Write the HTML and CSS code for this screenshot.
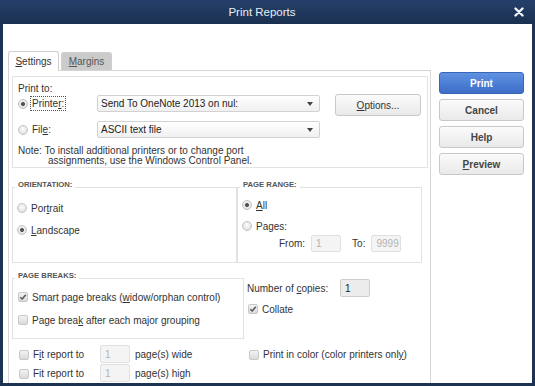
FILE: index.html
```html
<!DOCTYPE html>
<html lang="en">
<head>
    <meta charset="UTF-8" />
    <title>Print Reports</title>
    <link rel="stylesheet" href="styles.css">
</head>
<body>
    <div class="window">
        <div class="titlebar">
            <span class="title">Print Reports</span>
            <svg class="close" width="10" height="10" viewBox="0 0 10 10">
                <path d="M1.5 1.5 L8.5 8.5 M8.5 1.5 L1.5 8.5" stroke="#f2f4f7" stroke-width="2.4" stroke-linecap="round"/>
            </svg>
        </div>
        <div class="client">
            <div class="tabs-area">
                <div class="tabs">
                    <div class="tab active"><u>S</u>ettings</div>
                    <div class="tab"><u>M</u>argins</div>
                </div>
                <div class="panel">
                    <div class="print-to">
                        <div class="caption">Print to:</div>
                        <div class="print-grid">
                            <div class="opt"><span class="radio checked"></span><span class="focus">Printe<u>r</u>:</span></div>
                            <div class="select"><span>Send To OneNote 2013 on nul:</span><i class="arrow"></i></div>
                            <div class="btn options"><u>O</u>ptions...</div>
                            <div class="opt"><span class="radio"></span><span>Fil<u>e</u>:</span></div>
                            <div class="select"><span>ASCII text file</span><i class="arrow"></i></div>
                        </div>
                        <p class="note">Note: To install additional printers or to change port</p>
                        <p class="note indent">assignments, use the Windows Control Panel.</p>
                    </div>

                    <div class="row-groups">
                        <fieldset class="group orientation">
                            <legend>ORIENTATION:</legend>
                            <div class="opts">
                                <div class="opt"><span class="radio"></span><span>Por<u>t</u>rait</span></div>
                                <div class="opt"><span class="radio checked"></span><span><u>L</u>andscape</span></div>
                            </div>
                        </fieldset>
                        <fieldset class="group range">
                            <legend>PAGE RANGE:</legend>
                            <div class="opts tight">
                                <div class="opt"><span class="radio checked"></span><span><u>A</u>ll</span></div>
                                <div class="opt"><span class="radio"></span><span>Pa<u>g</u>es:</span></div>
                            </div>
                            <div class="from-to">
                                <span>From:</span>
                                <span class="field disabled">1</span>
                                <span class="to">To:</span>
                                <span class="field disabled">9999</span>
                            </div>
                        </fieldset>
                    </div>

                    <div class="row-breaks">
                        <fieldset class="group breaks">
                            <legend>PAGE BREAKS:</legend>
                            <div class="opts breaks-opts">
                                <div class="opt"><span class="check checked"><svg width="8" height="8" viewBox="0 0 8 8"><path d="M1.3 4.2 L3.2 6 L6.8 1.8" fill="none" stroke="#555" stroke-width="1.4"/></svg></span><span>Smart page breaks (<u>w</u>idow/orphan control)</span></div>
                                <div class="opt"><span class="check"></span><span>Page brea<u>k</u> after each major grouping</span></div>
                            </div>
                        </fieldset>
                        <div class="copies">
                            <div class="copies-row">
                                <span class="copies-label">Number of <u>c</u>opies:</span>
                                <span class="field count">1</span>
                            </div>
                            <div class="opt collate"><span class="check checked"><svg width="8" height="8" viewBox="0 0 8 8"><path d="M1.3 4.2 L3.2 6 L6.8 1.8" fill="none" stroke="#555" stroke-width="1.4"/></svg></span><span>Collate</span></div>
                        </div>
                    </div>

                    <div class="row-fit">
                        <div class="fit">
                            <span class="check"></span>
                            <span class="fit-label">F<u>i</u>t report to</span>
                            <span class="field disabled">1</span>
                            <span class="fit-unit">page(s) wide</span>
                        </div>
                        <div class="opt color"><span class="check"></span><span>Print in color (color printers onl<u>y</u>)</span></div>
                        <div class="fit">
                            <span class="check"></span>
                            <span class="fit-label">Fit report to</span>
                            <span class="field disabled">1</span>
                            <span class="fit-unit">page(s) high</span>
                        </div>
                    </div>
                </div>
            </div>
            <div class="buttons">
                <div class="btn primary">Print</div>
                <div class="btn">Cancel</div>
                <div class="btn">Help</div>
                <div class="btn"><u>P</u>review</div>
            </div>
        </div>
    </div>
</body>
</html>
```

FILE: styles.css
```css
body {
    margin: 0;
    font-family: "Liberation Sans", Arial, sans-serif;
    font-size: 10px;
    color: #333;
}

.window {
    width: 535px;
    height: 386px;
    background-color: #1c3352;
    display: flex;
    flex-direction: column;
}

/* Заголовок окна */
.titlebar {
    height: 24px;
    flex: none;
    display: flex;
    align-items: center;
    padding-right: 11px;
    background: linear-gradient(#24406a, #1a3050);
    color: #e9edf2;
}

.title {
    flex: 1;
    text-align: center;
    padding-left: 10px;
    font-size: 11.5px;
}

.client {
    flex: 1;
    background-color: #ffffff;
    margin: 0 3px 4px;
    display: flex;
}

/* Вкладки */
.tabs-area {
    margin-left: 5px;
    padding-top: 27px;
    width: 423px;
    display: flex;
    flex-direction: column;
}

.tabs {
    display: flex;
    align-items: flex-end;
    height: 19px;
}

.tab {
    height: 18px;
    width: 51px;
    box-sizing: border-box;
    margin-left: 2px;
    border: 1px solid #cfcfcf;
    border-bottom: none;
    border-radius: 3px 3px 0 0;
    background-color: #cbcbcb;
    color: #555;
    display: flex;
    align-items: center;
    justify-content: center;
}

.tab.active {
    height: 20px;
    margin-left: 0;
    margin-bottom: -1px;
    background-color: #ffffff;
    color: #333;
    position: relative;
    z-index: 1;
}

.panel {
    flex: 1;
    border: 1px solid #d6d6d6;
    border-bottom: none;
    padding: 5px 2px 0 3px;
}

/* Блок "Print to" */
.print-to {
    height: 92px;
    box-sizing: border-box;
    border: 1px solid #e2e2e2;
    padding: 6px 5px 0;
}

.caption {
    line-height: 12px;
}

.print-grid {
    display: grid;
    grid-template-columns: 79px 223px 101px;
    grid-template-rows: 17px 17px;
    row-gap: 9px;
}

.btn.options {
    grid-column: 3;
    grid-row: 1 / span 2;
    align-self: start;
    margin: -1px 0 0 15px;
    width: 86px;
    font-weight: normal;
    color: #333;
}

.select {
    display: flex;
    align-items: center;
    justify-content: space-between;
    border: 1px solid #d2d2d2;
    border-radius: 2px;
    background: linear-gradient(#ffffff, #f0f0f0);
    padding: 0 6px 0 3px;
    color: #222;
}

.arrow {
    border-left: 3px solid transparent;
    border-right: 3px solid transparent;
    border-top: 4px solid #444;
}

.note {
    margin: 0;
    line-height: 10px;
}

.note:first-of-type {
    margin-top: 8px;
}

.note.indent {
    padding-left: 30px;
}

/* Радио и флажки */
.opt {
    display: flex;
    align-items: center;
    height: 14px;
    white-space: nowrap;
}

.print-grid .opt {
    height: auto;
}

.radio {
    width: 10px;
    height: 10px;
    box-sizing: border-box;
    border: 1px solid #c2c2c2;
    border-radius: 50%;
    margin-right: 4px;
    background: radial-gradient(circle at 50% 40%, #fdfdfd, #d8d8d8);
    flex: none;
}

.radio.checked {
    background: radial-gradient(circle, #555 0 1.7px, transparent 2.3px), radial-gradient(circle at 50% 40%, #fdfdfd, #d8d8d8);
}

.check {
    width: 10px;
    height: 10px;
    box-sizing: border-box;
    border: 1px solid #c8c8c8;
    border-radius: 2px;
    margin-right: 4px;
    background: linear-gradient(#f3f3f3, #dadada);
    flex: none;
    display: flex;
    align-items: center;
    justify-content: center;
}

.focus {
    outline: 1px dotted #555;
    outline-offset: 1px;
}

/* Группы */
fieldset.group {
    margin: 0;
    padding: 0;
    border: 1px solid #e2e2e2;
    box-sizing: border-box;
    min-width: 0;
}

legend {
    margin-left: 2px;
    padding: 0 3px 4px;
    font-size: 7.7px;
    font-weight: bold;
    color: #555;
    line-height: 10px;
}

.row-groups {
    display: flex;
    margin-top: 12px;
}

.orientation {
    margin-left: 1px;
    width: 225px;
    height: 83px;
}

.range {
    margin-left: 5px;
    width: 185px;
    height: 83px;
}

.opts {
    display: flex;
    flex-direction: column;
    gap: 8px;
    padding: 7px 0 0 4px;
}

.opts.tight {
    gap: 7px;
    padding-top: 4px;
}

.from-to {
    display: flex;
    align-items: center;
    margin: 2px 0 0 41px;
}

.from-to .field {
    margin-left: 6px;
}

.from-to .to {
    margin-left: 11px;
}

.field {
    width: 30px;
    height: 17px;
    box-sizing: border-box;
    border: 1px solid #e0e0e0;
    border-radius: 2px;
    padding-left: 4px;
    display: flex;
    align-items: center;
    flex: none;
}

.field.disabled {
    background-color: #f4f4f4;
    color: #b3b3b3;
}

.row-breaks {
    display: flex;
    margin-top: 8px;
}

.breaks {
    margin-left: 1px;
    width: 232px;
    height: 68px;
}

.breaks-opts {
    gap: 9px;
    padding: 5px 0 0 5px;
}

.copies {
    margin-left: 3px;
    padding-top: 8px;
}

.copies-row {
    display: flex;
    align-items: center;
}

.copies-label {
    width: 93px;
}

.field.count {
    height: 18px;
    background-color: #ececec;
    border-color: #cdcdcd;
    color: #222;
}

.collate {
    margin: 5px 0 0 1px;
}

/* Нижние строки */
.row-fit {
    display: grid;
    grid-template-columns: 237px auto;
    grid-template-rows: 19px 19px;
    margin-top: 6px;
}

.fit {
    display: flex;
    align-items: flex-start;
    padding-left: 7px;
}

.fit .check {
    margin-top: 5px;
}

.fit-label {
    width: 67px;
    line-height: 19px;
}

.fit .field {
    height: 18px;
}

.fit-unit {
    margin-left: 5px;
    line-height: 19px;
}

.color {
    height: 19px;
}

/* Кнопки */
.buttons {
    margin-left: 8px;
    padding-top: 48px;
    width: 85px;
    display: flex;
    flex-direction: column;
    gap: 5px;
}

.btn {
    height: 22px;
    box-sizing: border-box;
    border: 1px solid #c8c8c8;
    border-radius: 3px;
    background: linear-gradient(#fbfbfb, #e9e9e9);
    color: #444;
    font-weight: bold;
    display: flex;
    align-items: center;
    justify-content: center;
}

.btn.primary {
    background: linear-gradient(#5f92e2, #3d6dc8);
    border-color: #3a66b8;
    color: #ffffff;
}
```
